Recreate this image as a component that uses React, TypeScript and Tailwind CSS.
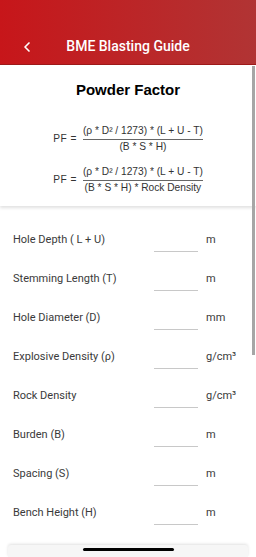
import { ChevronLeft } from "lucide-react";

const fields = [
  { label: "Hole Depth ( L + U)", unit: "m" },
  { label: "Stemming Length (T)", unit: "m" },
  { label: "Hole Diameter (D)", unit: "mm" },
  { label: "Explosive Density (ρ)", unit: "g/cm³" },
  { label: "Rock Density", unit: "g/cm³" },
  { label: "Burden (B)", unit: "m" },
  { label: "Spacing (S)", unit: "m" },
  { label: "Bench Height (H)", unit: "m" },
];

function Formula({ denominator }: { denominator: string }) {
  return (
    <div className="flex items-center justify-center gap-[6px] font-['Liberation_Sans',Arial,sans-serif] text-[10.2px] text-[#333]">
      <span className="mt-[1px] tracking-[0.5px]">PF&nbsp;=</span>
      <div className="flex flex-col items-center">
        <span className="pb-[1px] leading-[14px]">(ρ * D² / 1273) * (L + U - T)</span>
        <span className="h-px w-full bg-[#666]" />
        <span className="leading-[14px]">{denominator}</span>
      </div>
    </div>
  );
}

export default function App() {
  return (
    <div className="relative h-[557px] w-[256px] overflow-hidden bg-white font-['Roboto',sans-serif]">
      <header className="flex h-[65px] items-end border-b border-[#9e1a1a] bg-[linear-gradient(90deg,#c7161a,#b13434)] pb-[7px] text-white">
        <div className="relative flex w-full items-center justify-center">
          <ChevronLeft className="absolute left-[19px] h-[16px] w-[16px]" strokeWidth={2.5} />
          <h1 className="text-[14px] font-medium">BME Blasting Guide</h1>
        </div>
      </header>

      <section className="bg-white pb-[11px] pt-[14px] shadow-[0_2px_3px_rgba(0,0,0,0.12)]">
        <h2 className="text-center font-['Liberation_Sans',Arial,sans-serif] text-[15px] font-bold text-black">
          Powder Factor
        </h2>
        <div className="mt-[22px] flex flex-col gap-[11px]">
          <Formula denominator="(B * S * H)" />
          <Formula denominator="(B * S * H) * Rock Density" />
        </div>
      </section>

      <div className="mt-[22px] flex flex-col">
        {fields.map((f) => (
          <div key={f.label} className="flex h-[39px] items-start text-[11px] text-[#3a3a3a]">
            <span className="mt-[4px] w-[154px] pl-[13px]">{f.label}</span>
            <span className="mt-[23px] h-px w-[44px] bg-[#c8c8c8]" />
            <span className="ml-[8px] mt-[4px]">{f.unit}</span>
          </div>
        ))}
      </div>

      <div className="absolute right-[1px] top-[66px] h-[289px] w-[3px] bg-[#a6a6a6]" />

      <div className="absolute bottom-0 left-[8px] right-[8px] flex h-[12px] justify-center rounded-t-[3px] bg-[#f6f6f6] shadow-[0_-1px_3px_rgba(0,0,0,0.12)]">
        <span className="mt-[3px] h-[3px] w-[91px] rounded-full bg-black" />
      </div>
    </div>
  );
}
